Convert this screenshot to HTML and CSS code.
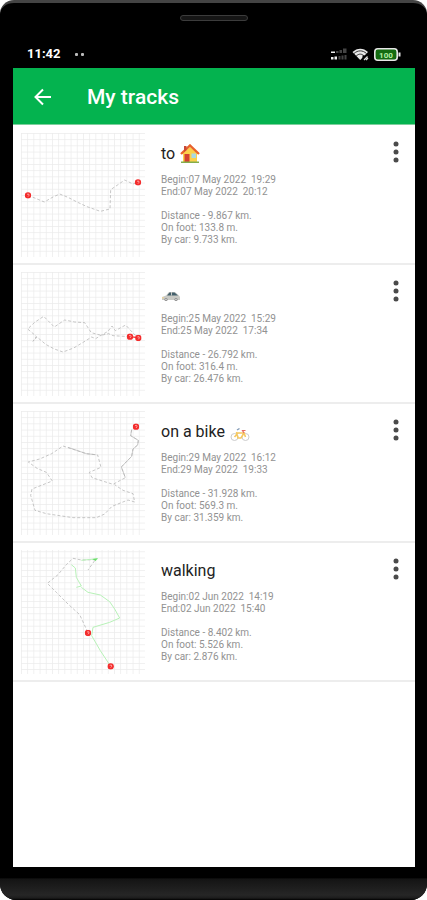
FILE: index.html
```
<!DOCTYPE html>
<html lang="en">
<head>
    <meta charset="UTF-8">
    <meta name="viewport" content="width=device-width, initial-scale=1.0">
    <title>My tracks</title>
    <link rel="stylesheet" href="styles.css">
</head>

<body>
<svg class="defs" aria-hidden="true">
  <defs>
    <pattern id="cells" x="24" y="22" width="18.6" height="18.6" patternUnits="userSpaceOnUse">
      <path d="M1 0V18.6M0 1H18.6" fill="none" stroke="#ececec" stroke-width="2.5"/>
    </pattern>
    <symbol id="pin" viewBox="0 0 20 20">
      <circle cx="10" cy="10" r="9.5" fill="#f32c2c"/>
      <path d="M7 7L12 6L13 10L10 14" fill="none" stroke="#ffb4b4" stroke-width="2.5"/>
    </symbol>
    <symbol id="dots" viewBox="0 0 8 24">
      <circle cx="4" cy="4" r="2.5"/>
      <circle cx="4" cy="12" r="2.5"/>
      <circle cx="4" cy="20" r="2.5"/>
    </symbol>
  </defs>
</svg>

<div class="phone">
  <div class="speaker"></div>

  <div class="status">
    <span class="clock">11:42</span>
    <span class="notes"><i></i><i></i></span>
    <svg class="signal" viewBox="0 0 16 13">
      <path d="M0 5V3.500H4V5zM0 11.500V9H2.500V11.500zM3.500 11.500V8.500H6V11.500z" fill="#eee"/>
      <path d="M5 5V3H7.500V5zM8.500 5V2H11V5zM12 5V.5H15.500V5zM7.500 11.500V8H9.500V11.500zM10.500 11.500V7.500H12.500V11.500zM13.500 11.500V7H15.500V11.500z" fill="#444"/>
    </svg>
    <svg class="wifi" viewBox="0 0 17 13">
      <path d="M.5 4C5-.5 11.500-.5 16 4L8.200 12z" fill="#e8e8e8"/>
      <path d="M2 5.500C6 2 10.500 2 14.500 5.500M4.200 8C7 5.500 9.500 5.500 12.200 8" fill="none" stroke="#222" stroke-width=".9"/>
      <path d="M10.500 7.500H17V13H10.500z" fill="#000"/>
      <path d="M12 12L15.500 8.500M14 12.200L16 10" stroke="#ddd" stroke-width="1.200"/>
    </svg>
    <svg class="battery" viewBox="0 0 27 13">
      <rect x=".8" y=".8" width="22.400" height="11.400" rx="3" fill="#146b10" stroke="#e6e6e6" stroke-width="1.600"/>
      <path d="M24.500 4.500H26.500V8.500H24.500z" fill="#e6e6e6"/>
      <text x="12" y="9.500" text-anchor="middle">100</text>
    </svg>
  </div>

  <div class="screen">
    <header class="toolbar">
      <button class="back" aria-label="Back">
        <svg viewBox="0 0 18 18"><path d="M17 9H2M9 1.500L1.500 9L9 16.500" fill="none" stroke="#fff" stroke-width="2"/></svg>
      </button>
      <h1>My tracks</h1>
    </header>

    <ul class="tracks">
      <li class="track">
        <svg class="map" viewBox="24 22 372 372">
          <rect x="24" y="22" width="372" height="372" fill="url(#cells)"/>
          <path class="car" d="M45 209L70 219L94 229L120 214L140 205L165 215L192 229L222 243L262 257L291 250L293 192L315 177L335 163L360 175L375 169"/>
          <use href="#pin" x="35" y="199" width="20" height="20"/>
          <use href="#pin" x="365" y="160" width="20" height="20"/>
        </svg>
        <div class="info">
          <h2>to
            <svg class="emoji" viewBox="0 0 20 20">
              <path d="M3 9L10 3L17 9V18H3z" fill="#fbd04b"/>
              <path d="M1 10L10 1.500L19 10" fill="none" stroke="#e8622c" stroke-width="2.400"/>
              <path d="M4 2H6.500V6L4 8z" fill="#c94a35"/>
              <path d="M4.500 10H9.500V18H4.500z" fill="#d43f32"/>
              <path d="M11.500 9.500H16V14H11.500z" fill="#a9d9e2"/>
              <path d="M1 17.500H19V19H1z" fill="#84ad4b"/>
            </svg>
          </h2>
          <p>Begin:07 May 2022&nbsp; 19:29<br>End:07 May 2022&nbsp; 20:12</p>
          <p>Distance - 9.867 km.<br>On foot: 133.8 m.<br>By car: 9.733 km.</p>
        </div>
        <button class="more" aria-label="More"><svg><use href="#dots"/></svg></button>
      </li>

      <li class="track">
        <svg class="map" viewBox="24 22 372 372">
          <rect x="24" y="22" width="372" height="372" fill="url(#cells)"/>
          <path class="car" d="M350 216L300 213L287 207L264 212L235 204L215 174L185 172L155 166L124 187L92 155L65 173L44 193L70 215L60 230L72 217L98 239L124 253L150 262L182 250L212 232L236 217L248 222L264 212L285 200L297 184L307 198L338 181L360 205L375 219"/>
          <path d="M350 216L375 219" stroke="#f32c2c" stroke-width="4"/>
          <use href="#pin" x="341" y="206" width="20" height="20"/>
          <use href="#pin" x="366" y="210" width="20" height="20"/>
        </svg>
        <div class="info">
          <h2>
            <svg class="emoji" viewBox="0 0 20 20">
              <path d="M1 14L5 12.500L8 9H14L18 12.500L19 14V17H1z" fill="#c9cac5"/>
              <path d="M6 12.500L8.500 9.500H13.500L17 12.500z" fill="#45616d"/>
              <path d="M10.500 9V12.500" stroke="#c9cac5"/>
              <path d="M1 14H3V15.500H1z" fill="#e5d0a0"/>
              <circle cx="5" cy="16.500" r="1.600" fill="#888"/>
              <circle cx="15" cy="16.500" r="1.600" fill="#888"/>
              <circle cx="5" cy="16.500" r=".8" fill="#ddd"/>
              <circle cx="15" cy="16.500" r=".8" fill="#ddd"/>
            </svg>
          </h2>
          <p>Begin:25 May 2022&nbsp; 15:29<br>End:25 May 2022&nbsp; 17:34</p>
          <p>Distance - 26.792 km.<br>On foot: 316.4 m.<br>By car: 26.476 km.</p>
        </div>
        <button class="more" aria-label="More"><svg><use href="#dots"/></svg></button>
      </li>

      <li class="track">
        <svg class="map" viewBox="24 22 372 372">
          <rect x="24" y="22" width="372" height="372" fill="url(#cells)"/>
          <path class="car" d="M356 78L353 96L376 110L374 124L360 136L356 158L325 190L337 222L300 242L237 222L229 206L264 191L254 154L220 150L150 127L116 150L80 166L46 175L72 194L100 206L118 232L85 245L57 256L53 275L66 320L100 330L180 342L250 342L275 331L297 308L345 289L365 295L360 270L330 260L305 243"/>
          <path class="solid" d="M356 78L353 96L376 110L374 124L360 136L356 158L325 190L337 222M165 131L220 150L248 153"/>
          <use href="#pin" x="359" y="59" width="20" height="20"/>
        </svg>
        <div class="info">
          <h2>on a bike
            <svg class="emoji" viewBox="0 0 20 20">
              <g fill="none">
                <circle cx="4.500" cy="15" r="3.500" stroke="#ccc"/>
                <circle cx="15.500" cy="15" r="3.500" stroke="#ccc"/>
                <path d="M4.500 15L8 11H14L11 16H8L6.500 10M14 11L15.500 15" stroke="#f5c860" stroke-width="1.600"/>
                <path d="M14 11L12.500 8.500H15.500" stroke="#e86a60" stroke-width="1.200"/>
                <path d="M7 8L9.500 6.500" stroke="#7f98b4" stroke-width="1.400"/>
              </g>
            </svg>
          </h2>
          <p>Begin:29 May 2022&nbsp; 16:12<br>End:29 May 2022&nbsp; 19:33</p>
          <p>Distance - 31.928 km.<br>On foot: 569.3 m.<br>By car: 31.359 km.</p>
        </div>
        <button class="more" aria-label="More"><svg><use href="#dots"/></svg></button>
      </li>

      <li class="track">
        <svg class="map" viewBox="24 18 372 372">
          <rect x="24" y="18" width="372" height="372" fill="url(#cells)"/>
          <path class="car" d="M248 47L205 48L180 43L160 62L135 92L103 118L130 145L165 180L200 212L225 266M245 50L225 78"/>
          <path class="foot" d="M255 44L205 49M175 62L187 72L190 100L205 126L190 130M205 130L225 145L262 153L290 173L305 195L320 222L290 235L240 250L236 275L262 320L293 367"/>
          <path d="M238 45L254 43L248 51z" fill="#69dc69"/>
          <use href="#pin" x="215" y="257" width="20" height="20"/>
          <use href="#pin" x="283" y="357" width="20" height="20"/>
        </svg>
        <div class="info">
          <h2>walking</h2>
          <p>Begin:02 Jun 2022&nbsp; 14:19<br>End:02 Jun 2022&nbsp; 15:40</p>
          <p>Distance - 8.402 km.<br>On foot: 5.526 km.<br>By car: 2.876 km.</p>
        </div>
        <button class="more" aria-label="More"><svg><use href="#dots"/></svg></button>
      </li>
    </ul>
  </div>

  <div class="chin"></div>
</div>
</body>
</html>
```

FILE: styles.css
```
* { box-sizing: border-box; }
body { margin: 0; background: #fff; font-family: Roboto, "Liberation Sans", sans-serif; }
h1, h2, p, ul { margin: 0; padding: 0; }
button { background: none; border: none; padding: 0; cursor: pointer; }
svg { display: block; }
.defs { position: absolute; width: 0; height: 0; }

/* phone body */
.phone { display: flex; flex-direction: column; min-height: 100vh; background: #000; border-top: 3px solid #444; border-radius: 14px 14px 16px 16px; overflow: hidden; }
.speaker { width: 68px; height: 6px; margin: 12px auto 0; border: 1px solid #3c3c3c; border-radius: 3px; background: #161616; }
.chin { height: 33px; background: linear-gradient(#000 33%, #141414 36%, #262626 85%, #1c1c1c 94%, #000); }

.status { display: flex; align-items: center; height: 47px; padding: 19px 26px 0 27px; color: #fff; }
.clock { font-size: 13px; line-height: 16px; font-weight: 700; }
.notes { display: flex; gap: 3px; margin: 0 auto 0 14px; }
.notes i { width: 3px; height: 3px; border-radius: 1px; background: #bbb; }
.signal { width: 16px; height: 13px; }
.wifi { width: 17px; height: 13px; margin: 0 5px; }
.battery { width: 27px; height: 13px; }
.battery text { font-size: 8px; font-weight: 700; fill: #b5f0a5; }

.screen { flex: 1; margin: 0 12px 0 13px; background: #fff; }
.toolbar { display: flex; align-items: center; height: 57px; padding: 2px 21px 0; background: #04b34f; border-bottom: 1px solid #7ccf9c; color: #fff; }
.toolbar h1 { margin-left: 35px; font-size: 21px; line-height: 24px; font-weight: 500; }
.back svg { width: 18px; height: 18px; }

/* list */
.tracks { padding-top: 1px; list-style: none; }
.track { display: flex; align-items: flex-start; min-height: 139px; padding: 7px 15px 0 8px; border-bottom: 2px solid #ededed; }
.map { flex: none; width: 124px; height: 124px; }
.info { flex: 1; margin-left: 16px; }
.info h2 { display: flex; align-items: center; gap: 5px; height: 28px; margin: 7px 0 6px; font-size: 16px; line-height: 20px; font-weight: 400; color: #222; }
.info p { margin-bottom: 12px; font-size: 10px; line-height: 12px; color: #929292; }
.info p:last-child { margin-bottom: 0; }
.emoji { width: 20px; height: 20px; }
.more { margin-top: 7px; }
.more svg { width: 8px; height: 24px; fill: #4a4a4a; }

.car { fill: none; stroke: #aaa; stroke-width: 2; stroke-dasharray: 9 6; }
.solid { fill: none; stroke: #b4b4b4; stroke-width: 2; }
.foot { fill: none; stroke: #b8f2b8; stroke-width: 3; }
```
